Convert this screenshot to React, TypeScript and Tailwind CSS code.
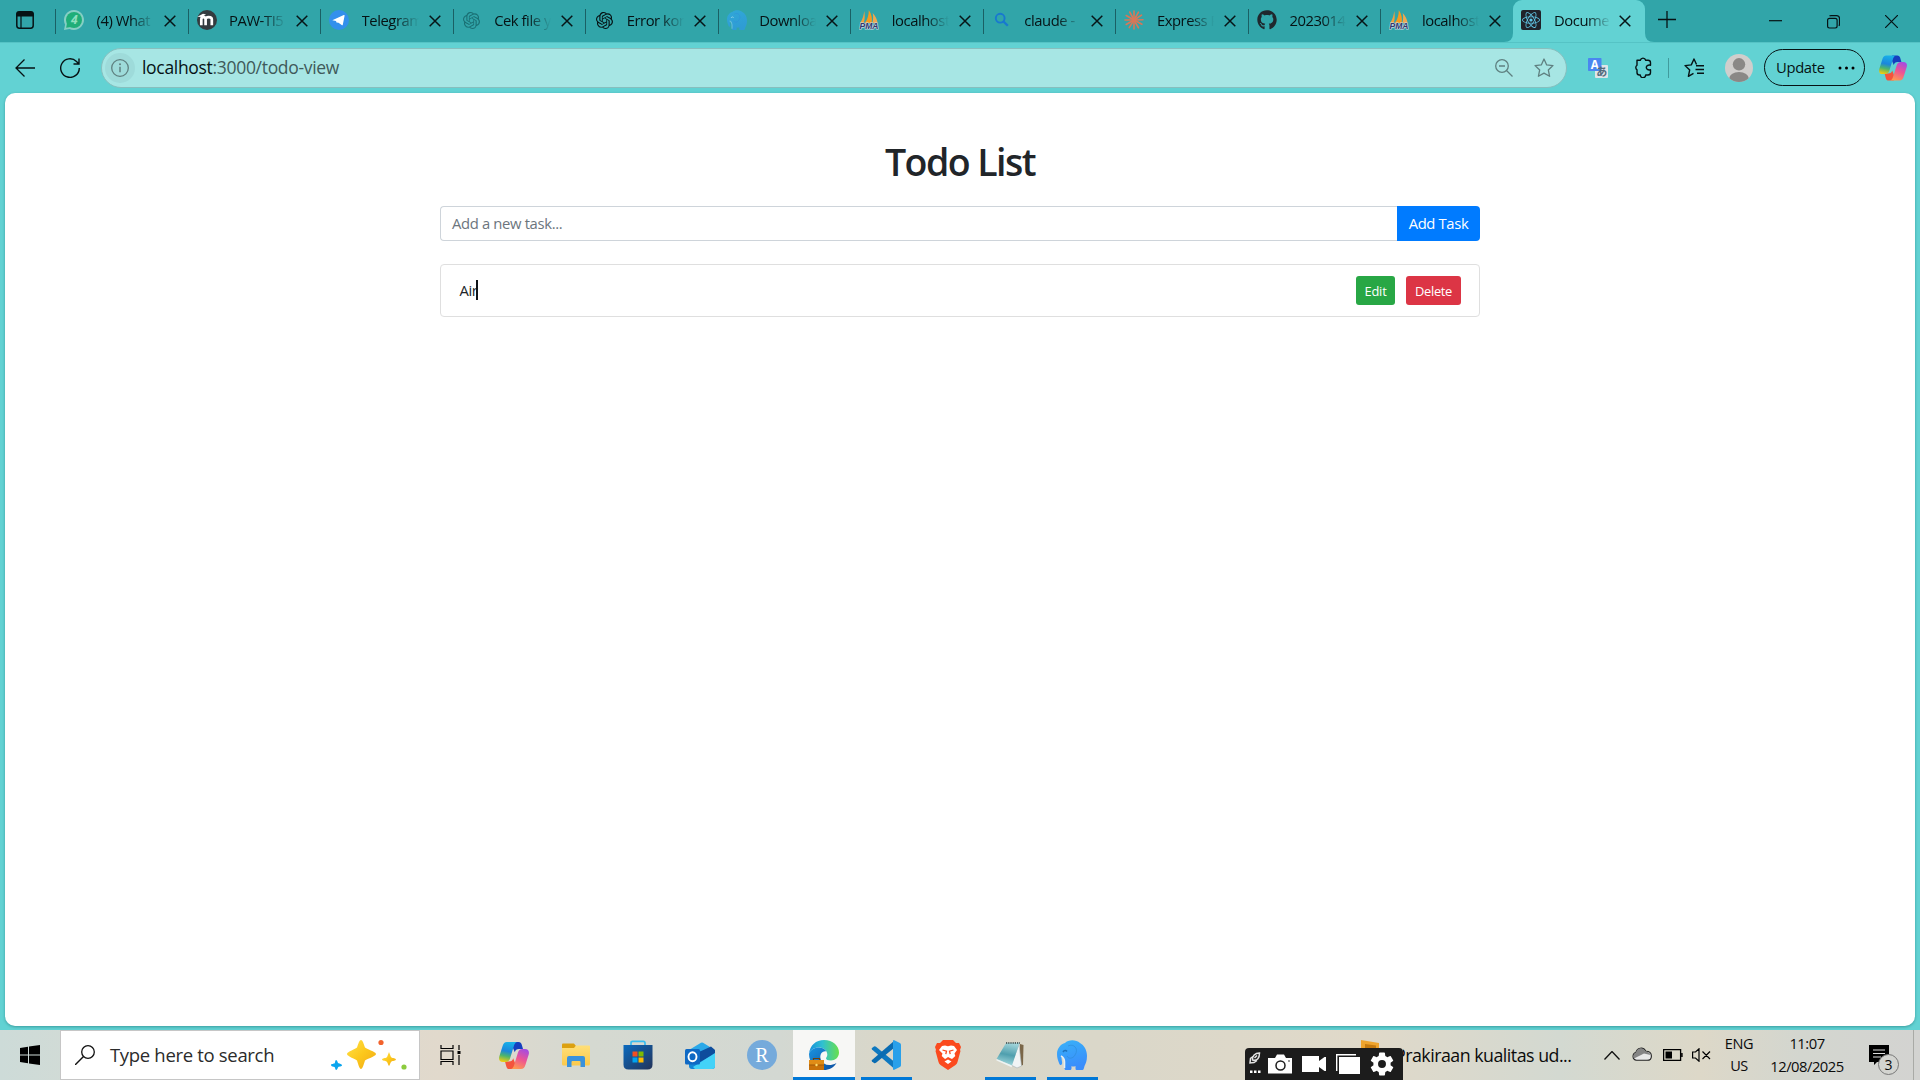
import React from "react";
import { FaGithub, FaReact } from "react-icons/fa";
import { SiOpenai } from "react-icons/si";

function Copilot({ id, w, h }: { id: string; w: number; h: number }) {
  return (
    <svg width={w} height={h} viewBox="0 0 30 27" className="shrink-0">
      <defs>
        <linearGradient id={id + "a"} x1="0.5" y1="0" x2="0.3" y2="1">
          <stop offset="0" stopColor="#18b0e8" />
          <stop offset="0.45" stopColor="#1b86dc" />
          <stop offset="0.7" stopColor="#4cb56c" />
          <stop offset="1" stopColor="#f2cc10" />
        </linearGradient>
        <linearGradient id={id + "b"} x1="0.7" y1="0" x2="0.3" y2="1">
          <stop offset="0" stopColor="#a64be0" />
          <stop offset="0.5" stopColor="#ee5592" />
          <stop offset="1" stopColor="#ff9a50" />
        </linearGradient>
      </defs>
      <path d="M14 0h5.500c2 0 2.700 1 3.200 2.600L24 7h-4c-2.500 0-3.500 1-4.200 3.200L14 6z" fill="#153fbf" />
      <path d="M16 27h-5.500c-2 0-2.700-1-3.200-2.600L6 19.500h4c2.500 0 3.500-1 4.200-3.200L16 21z" fill="#f4543c" />
      <path d="M8 0h10c-1.800.6-2.500 2-3.100 4l-3.700 12c-.8 2.700-2 4-4.700 4H4C.5 20-.5 17.500.3 14.500L3.600 4C4.500 1.200 5.500 0 8 0z" fill={`url(#${id}a)`} />
      <path d="M22 27H12c1.800-.6 2.500-2 3.100-4l3.700-12c.8-2.700 2-4 4.700-4H26c3.500 0 4.500 2.500 3.700 5.500L26.400 23c-.9 2.800-1.900 4-4.400 4z" fill={`url(#${id}b)`} />
    </svg>
  );
}

function Elephant({ size, flat }: { size: number; flat?: boolean }) {
  return (
    <svg width={size} height={size} viewBox="0 0 30 30" className="shrink-0">
      <defs>
        <linearGradient id={flat ? "elf" : "elg"} x1="0" y1="0" x2="0.3" y2="1">
          <stop offset="0" stopColor={flat ? "#30a8d8" : "#38b2f8"} />
          <stop offset="1" stopColor={flat ? "#2f9cd4" : "#3a8dfc"} />
        </linearGradient>
      </defs>
      <path d="M8 3C11-.5 19-.8 23 3c4 2 7 7 7 13 0 5-1.500 8-2.500 10-.5 2-.8 4-2 4h-6c-1 0-1-1-1-2v-2c-2 1-3 .5-4 0v2c0 1.500-.5 2-1.500 2H9c-1 0-1.500-.5-1.500-2v-8c-1-1-1.500-2-2-4l-1 2c0 2 1 4 .5 6-1 2-2.500 1-3-1-1-3-2-5-2-9C0 8 4 4 8 3z" fill={`url(#${flat ? "elf" : "elg"})`} />
      <path d="M11 6c6-3 11 3 7 9-2 4-7 4-8 1" fill="none" stroke="#2f8dda" strokeWidth="1" opacity="0.7" />
      <path d="M6 12c1.200-2 3-2 4-.5" fill="none" stroke={flat ? "#8cd2e6" : "#1f72bb"} strokeWidth="1.500" />
      <path d="M4 16c2 1 3.500 3 3.500 6v6" fill="none" stroke={flat ? "#65bddc" : "#e8eef0"} strokeWidth="1.600" />
    </svg>
  );
}

function WhatsApp() {
  return (
    <svg width="20" height="20" viewBox="0 0 20 20">
      <path d="M10 0a10 10 0 1 1-4.600 18.900L0 20l1.100-5.400A10 10 0 0 1 10 0z" fill="#86cfc4" />
      <circle cx="10" cy="10" r="8" fill="#1fae78" />
      <path d="M2.200 17.800 3 13l4 4z" fill="#1fae78" />
      <text x="10.300" y="14.300" fontSize="12" fontWeight="700" fontStyle="italic" textAnchor="middle" fill="#8fe0c0" fontFamily="Open Sans, sans-serif">4</text>
    </svg>
  );
}

function Moodle() {
  return (
    <svg width="20" height="20" viewBox="0 0 20 20">
      <circle cx="10" cy="10" r="10" fill="#333b3f" />
      <path d="M4.300 15.200V9.300c0-3 4.300-3 4.300 0v5.900m0-5.900c0-3 6.200-3 6.200 0v5.900" fill="none" stroke="#fff" strokeWidth="2.700" />
      <path d="M.4 6.800 6 3.800l3 .7-4 2.600z" fill="#fff" />
    </svg>
  );
}

function Telegram() {
  return (
    <svg width="20" height="20" viewBox="0 0 20 20">
      <circle cx="10" cy="10" r="10" fill="#3390ec" />
      <path d="M3.300 10.300 14.800 5c.6-.2.900.1.800.7l-1.800 9c-.2.700-.6.800-1.100.4l-3.200-2.400-2-.2-.5-1.400z" fill="#fff" />
    </svg>
  );
}

function Pma() {
  return (
    <svg width="20" height="20" viewBox="0 0 20 20">
      <path d="M5.200 1C6 5 6 9 4.800 13H1.200C3.500 9.500 4.900 5 5.200 1z" fill="#f0a040" />
      <path d="M9.800 0c3 4 3.600 9 2.800 13H5.800C8.500 9.500 9.800 5 9.800 0z" fill="#f79a1c" />
      <path d="M13.700 3c3 3 4.500 7 4.900 10h-5.200c.9-3 1-7 .3-10z" fill="#f0a850" />
      <text x="10" y="19.300" fontSize="8.200" fontWeight="700" fontStyle="italic" textAnchor="middle" textLength="19" lengthAdjust="spacingAndGlyphs" fill="#35386e" stroke="#c9dde6" strokeWidth="1.200" paintOrder="stroke" fontFamily="Liberation Sans, sans-serif">PMA</text>
    </svg>
  );
}

function Search() {
  return (
    <svg width="20" height="20" viewBox="0 0 20 20">
      <circle cx="8.200" cy="8.200" r="4.400" fill="none" stroke="#1878d0" strokeWidth="1.900" />
      <path d="m11.500 11.500 4.300 4.300" stroke="#1878d0" strokeWidth="2.300" />
    </svg>
  );
}

function Burst() {
  const rays = [0, 30, 57, 88, 118, 150, 180, 212, 240, 270, 300, 332];
  return (
    <svg width="20" height="20" viewBox="0 0 20 20">
      {rays.map((r) => (
        <path key={r} d="M10 10V1" stroke="#d97757" strokeWidth="1.600" strokeLinecap="round" transform={`rotate(${r} 10 10)`} />
      ))}
    </svg>
  );
}

function CloseX() {
  return (
    <svg width="12" height="12" viewBox="0 0 12 12" className="shrink-0">
      <path d="m.7.700 10.600 10.600m0-10.600L.7 11.300" stroke="#071517" strokeWidth="1.500" />
    </svg>
  );
}

const tabs: { t: string; icon: React.ReactNode }[] = [
  { t: "(4) What", icon: <WhatsApp /> },
  { t: "PAW-TI5", icon: <Moodle /> },
  { t: "Telegram", icon: <Telegram /> },
  { t: "Cek file y", icon: <SiOpenai size={17} color="#1a6f73" /> },
  { t: "Error kon", icon: <SiOpenai size={17} color="#051012" /> },
  { t: "Downloa", icon: <Elephant size={20} flat /> },
  { t: "localhost", icon: <Pma /> },
  { t: "claude -", icon: <Search /> },
  { t: "Express R", icon: <Burst /> },
  { t: "2023014", icon: <FaGithub size={20} color="#1f282e" /> },
  { t: "localhost", icon: <Pma /> },
];

const tabText =
  "w-[57px] shrink-0 overflow-hidden whitespace-nowrap text-[14.800px] leading-[20px] tracking-[-0.450px] text-[#061214] [mask-image:linear-gradient(to_right,black_58%,transparent_100%)]";

function TabBar() {
  return (
    <div className="flex h-[42px] bg-[#31a5a9]">
      <div className="flex w-[55px] shrink-0 items-center pl-[16px] pb-[2px]">
        <svg width="18" height="18" viewBox="0 0 18 18">
          <rect x="0.800" y="0.800" width="16.400" height="16.400" rx="2.600" fill="none" stroke="#061214" strokeWidth="1.500" />
          <path d="M1 2.500Q1 1 3 1h12q2 0 2 1.500V5H1zM5 5v12" fill="#061214" stroke="#061214" strokeWidth="1.200" />
        </svg>
      </div>
      {tabs.map((tab, i) => (
        <div key={i} className="flex h-[40px] w-[132.550px] shrink-0 items-center">
          <div className="mt-[3px] h-[25px] w-px shrink-0 bg-[#1a6064]" />
          <div className="ml-[8px] flex h-[20px] w-[20px] shrink-0 items-center justify-center">{tab.icon}</div>
          <div className={"ml-[12.500px] " + tabText}>{tab.t}</div>
          <div className="ml-[10px] mt-[2px]"><CloseX /></div>
        </div>
      ))}
      <div className="relative flex h-[42px] w-[132px] shrink-0 items-center rounded-t-[9px] bg-[#62d2d3] pb-[2px]">
        <svg className="absolute -left-[9px] bottom-0" width="9" height="9" viewBox="0 0 9 9"><path d="M9 0v9H0q9 0 9-9z" fill="#62d2d3" /></svg>
        <svg className="absolute -right-[9px] bottom-0" width="9" height="9" viewBox="0 0 9 9"><path d="M0 0v9h9Q0 9 0 0z" fill="#62d2d3" /></svg>
        <div className="ml-[8px] flex h-[20px] w-[20px] items-center justify-center rounded-[2px] bg-[#20232a]">
          <FaReact size={18} color="#61c8e8" />
        </div>
        <div className={"ml-[13px] " + tabText}>Docume</div>
        <div className="ml-[8px] mt-[2px]"><CloseX /></div>
      </div>
      <svg className="ml-[13px] mt-[11px]" width="18" height="18" viewBox="0 0 18 18"><path d="M9 0v17M0 8.500h18" stroke="#061214" strokeWidth="1.300" /></svg>
      <svg className="ml-[93px] mt-[20px]" width="13" height="2"><path d="M0 .7h13" stroke="#061214" strokeWidth="1.200" /></svg>
      <svg className="ml-[45px] mt-[15px]" width="13" height="14" viewBox="0 0 13 14">
        <path d="M.6 5.200q0-1.900 1.900-1.900h5.700q1.900 0 1.900 1.900v5.900q0 1.900-1.900 1.900H2.500Q.6 13 .6 11.100zM2.500 1q.5-.4 1.500-.4h5.500q3 0 3 3v5.500q0 1-.6 1.700" fill="none" stroke="#061214" strokeWidth="1.200" />
      </svg>
      <svg className="ml-[45px] mt-[15px]" width="13" height="13" viewBox="0 0 13 13"><path d="m0 0 13 13M13 0 0 13" stroke="#061214" strokeWidth="1.200" /></svg>
    </div>
  );
}

const star = "m10 1 2.700 5.900 6.300.7-4.700 4.300 1.300 6.400L10 15.100l-5.600 3.200 1.300-6.400L1 7.600l6.300-.7z";

function Toolbar() {
  return (
    <div className="flex h-[51px] items-center border-t border-[#55c3c5] bg-[#62d2d3]">
      <svg className="ml-[15px] shrink-0" width="20" height="18" viewBox="0 0 20 18"><path d="M20 9H1M9.500.5 1 9l8.500 8.500" fill="none" stroke="#061214" strokeWidth="1.300" /></svg>
      <svg className="ml-[25px] shrink-0" width="20" height="20" viewBox="0 0 20 20"><path d="M19.300 10A9.300 9.300 0 1 1 16.500 3.400L19 6M19 .5V6h-5.500" fill="none" stroke="#061214" strokeWidth="1.400" /></svg>
      <div className="-mt-px ml-[21px] flex h-[40px] w-[1466px] shrink-0 items-center rounded-full border border-[#87bfbe] bg-[#a7e6e4]">
        <div className="ml-[3px] flex h-[30px] w-[30px] items-center justify-center rounded-full bg-[#9edbda]">
          <svg width="18" height="18" viewBox="0 0 18 18"><circle cx="9" cy="9" r="8.300" fill="none" stroke="#5f8080" strokeWidth="1.300" /><path d="M9 7.700v5.500" stroke="#5f8080" strokeWidth="1.500" /><circle cx="9" cy="5.300" r="1" fill="#5f8080" /></svg>
        </div>
        <div className="ml-[7px] flex-1 text-[17.500px] tracking-[-0.310px] text-[#3f5a5a]"><span className="text-[#061214]">localhost</span>:3000/todo-view</div>
        <svg width="18" height="18" viewBox="0 0 18 18"><circle cx="7" cy="7" r="6.300" fill="none" stroke="#5f8080" strokeWidth="1.300" /><path d="M11.500 11.500 17.500 17.500M4 7h6" stroke="#5f8080" strokeWidth="1.300" /></svg>
        <svg className="ml-[21px] mr-[12px]" width="20" height="20" viewBox="0 0 20 20"><path d={star} fill="none" stroke="#5f8080" strokeWidth="1.300" strokeLinejoin="round" /></svg>
      </div>
      <svg className="ml-[21px] shrink-0" width="21" height="21" viewBox="0 0 21 21">
        <rect x="7" y="7" width="13" height="13" rx="1" fill="#dfe5e8" />
        <rect x="0" y="0" width="13.500" height="13" rx="0.800" fill="#4a86f0" />
        <text x="6.700" y="10.500" fontSize="11.500" fontWeight="700" textAnchor="middle" fill="#fff" fontFamily="Open Sans, sans-serif">A</text>
        <text x="13.700" y="17.800" fontSize="11" fontWeight="700" textAnchor="middle" fill="#546b7c" fontFamily="Noto Sans CJK JP, sans-serif">あ</text>
      </svg>
      <svg className="-mt-px ml-[24px] shrink-0" width="20" height="21" viewBox="0 0 20 21">
        <path d="M4 3.200h3.300a2.800 2.800 0 0 1 5.400 0H15q2.500 0 2.500 2.500v2.500c-2.800-.6-4.200 1-4.200 2.300s1.400 2.900 4.200 2.300v2.700q0 2.500-2.500 2.500h-2.300a2.700 2.700 0 0 1-5.400 0H6.500q-2.500 0-2.500-2.500v-2.700a2.800 2.800 0 0 1 0-4.600z" fill="none" stroke="#061214" strokeWidth="1.400" strokeLinejoin="round" />
      </svg>
      <div className="ml-[15px] h-[20px] w-px shrink-0 bg-[#409b9d]" />
      <svg className="ml-[15px] shrink-0" width="20" height="20" viewBox="0 0 20 20"><path d="M12.500 6.500 10 1 7.300 6.900 1 7.600l4.700 4.300-1.300 6.400L9.500 15.300M12 7.800h8M11.500 11.500H20M13 15.200h7" fill="none" stroke="#061214" strokeWidth="1.400" strokeLinejoin="round" /></svg>
      <svg className="ml-[21px] shrink-0" width="28" height="28" viewBox="0 0 28 28">
        <clipPath id="av"><circle cx="14" cy="14" r="14" /></clipPath>
        <g clipPath="url(#av)"><rect width="28" height="28" fill="#d0cecc" /><circle cx="14" cy="10.300" r="6.200" fill="#8a8886" /><ellipse cx="14" cy="25" rx="10" ry="7" fill="#8a8886" /></g>
      </svg>
      <div className="-mt-px ml-[11px] flex h-[37px] w-[101px] shrink-0 items-center rounded-full border-[1.500px] border-[#061214] pl-[11px]">
        <span className="w-[50px] text-[14.800px] tracking-[-0.350px] text-[#061214]">Update</span>
        <svg className="ml-[12px]" width="18" height="4" viewBox="0 0 18 4"><circle cx="2" cy="2" r="1.500" /><circle cx="8.500" cy="2" r="1.500" /><circle cx="15" cy="2" r="1.500" /></svg>
      </div>
      <div className="ml-[14px]"><Copilot id="ct" w={28} h={26} /></div>
    </div>
  );
}

function Todo() {
  return (
    <main className="mx-[5px] h-[933px] rounded-[10px] bg-white shadow-[0_1px_3px_#3a9c9e]">
      <div className="mx-auto w-[1040px] pt-[45px] text-[14.800px] text-[#212529]">
        <h1 className="h-[48px] text-center text-[37.500px] font-semibold leading-[48px] tracking-[-1.550px]">Todo List</h1>
        <div className="mt-[20px] flex h-[35px]">
          <div className="flex-1 rounded-l-[4px] border border-r-0 border-[#ced4da] pl-[11px] leading-[33px] tracking-[-0.340px] text-[#6c757d]">Add a new task...</div>
          <button className="w-[83px] rounded-r-[4px] bg-[#007bff] tracking-[-0.350px] text-white">Add Task</button>
        </div>
        <div className="mt-[23px] flex h-[53px] items-center rounded-[4px] border border-[#dfdfdf] pl-[18.500px] pr-[18px]">
          <span className="tracking-[-0.400px]">Air</span>
          <span className="-ml-[1px] -mt-[2px] h-[20px] w-[2px] bg-[#101418]" />
          <button className="ml-auto h-[29px] w-[39px] rounded-[3px] bg-[#28a745] pt-[2px] text-[12.900px] tracking-[-0.200px] text-white">Edit</button>
          <button className="ml-[11px] h-[29px] w-[55px] rounded-[3px] bg-[#dc3545] pt-[2px] text-[12.900px] tracking-[-0.300px] text-white">Delete</button>
        </div>
      </div>
    </main>
  );
}

function TaskButton({ children, bar, active }: { children: React.ReactNode; bar?: boolean; active?: boolean }) {
  return (
    <div className={"flex h-[50px] w-[62px] shrink-0 flex-col items-center " + (active ? "bg-[#f7f7f5]" : "")}>
      <div className="flex h-[47px] items-center pt-[3px]">{children}</div>
      <div className={"h-[3px] " + (active ? "w-full bg-[#0078d7]" : bar ? "w-[51px] bg-[#0078d7]" : "w-0")} />
    </div>
  );
}

function Taskbar() {
  return (
    <footer className="flex h-[50px] bg-[linear-gradient(90deg,#cddbd8_0px,#dbdad0_250px,#e1d9cc_440px,#d5d9d1_590px,#d3d8d2_780px,#d9d7ca_880px,#dad7c9_1100px,#e0d9c9_1370px,#d3d9d1_1560px,#ddd8c8_1700px,#d3d6cf_1800px,#d3d3d1_1920px)] text-[#0b0b0b]">
      <div className="flex w-[60px] shrink-0 items-center justify-center">
        <svg width="20" height="20" viewBox="0 0 20 20"><path d="M0 3l8-1.200V9.500H0zM9 1.600 20 0v9.500H9zM0 10.500h8v7.700L0 17zM9 10.500h11V20L9 18.400z" fill="#000" /></svg>
      </div>
      <div className="flex h-[50px] w-[360px] shrink-0 items-center border border-[#c6c6c6] bg-white pl-[14px]">
        <svg width="20" height="20" viewBox="0 0 20 20"><circle cx="13" cy="7" r="6.300" fill="none" stroke="#111" strokeWidth="1.300" /><path d="M8.500 11.500 0 20" stroke="#111" strokeWidth="1.400" /></svg>
        <span className="ml-[15px] w-[221px] whitespace-nowrap text-[18.500px] tracking-[-0.320px] text-[#2b2b2b]">Type here to search</span>
        <svg width="76" height="32" viewBox="0 0 76 32">
          <defs><linearGradient id="sp" x1="0" y1="0" x2="1" y2="1"><stop offset="0" stopColor="#ffe14a" /><stop offset="0.500" stopColor="#fcc81c" /><stop offset="1" stopColor="#f0a818" /></linearGradient></defs>
          <path d="M30 1c1.500 0 2.500 3 4 7.500 1 1.500 11 4 11 6.500s-10 5-11 6.500C32.500 26 31.500 30 30 30s-2.500-4-4-8.500C25 20 16 17.500 16 15s9-5 10-6.500C27.500 4 28.500 1 30 1z" fill="url(#sp)" />
          <path d="M58 13c1 2 1.500 5 2.500 5.500s4.500 1 4.500 2-3.500 1.500-4.500 2S59 26 58 27c-1-1-1.500-4-2.500-4.500s-4.500-1-4.500-2 3.500-1.500 4.500-2S57 15 58 13z" fill="url(#sp)" />
          <path d="M5 21c1.500 0 1.500 3 2.500 3.300S11 25 11 26.300 8 27.500 7.300 28 6.500 31 5.200 31 4.500 28.500 3.500 28 0 27.500 0 26s3-1 3.700-1.800S4 21 5 21z" fill="#0aa5ee" />
          <circle cx="50" cy="3.500" r="2.600" fill="#f2622c" /><circle cx="73" cy="28" r="2.600" fill="#8ccb3e" />
        </svg>
      </div>
      <div className="mr-[3px] flex w-[60px] shrink-0 items-center justify-center">
        <svg width="21" height="20" viewBox="0 0 21 20"><path d="M1 0v3.500h12V0M1 20v-3.500h12V20M1 6h12v8.500H1zM19 0v5M19 10v10" fill="none" stroke="#000" strokeWidth="1.200" /><rect x="17.500" y="6" width="3" height="3" /></svg>
      </div>
      <TaskButton><Copilot id="cb" w={30} h={27} /></TaskButton>
      <TaskButton>
        <svg width="28" height="24" viewBox="0 0 28 24">
          <defs><linearGradient id="fo" x1="0" y1="0" x2="0" y2="1"><stop offset="0" stopColor="#ffdf78" /><stop offset="1" stopColor="#fbc94c" /></linearGradient></defs>
          <path d="M0 1.500Q0 .5 1 .5h11l2 2.500v5H0z" fill="#dca010" /><path d="M0 5h12l2-2.500h13q1 0 1 1V21q0 1.500-1.500 1.500h-25Q0 22.500 0 21z" fill="url(#fo)" />
          <path d="M5 24V15q0-2 2-2h14q2 0 2 2v9h-4.500v-5q0-1-1-1h-7q-1 0-1 1v5z" fill="#3a92dc" />
        </svg>
      </TaskButton>
      <TaskButton>
        <svg width="30" height="30" viewBox="0 0 30 30">
          <defs><linearGradient id="st" x1="0" y1="0" x2="1" y2="1"><stop offset="0" stopColor="#0a6abf" /><stop offset="1" stopColor="#243358" /></linearGradient></defs>
          <path d="M8 5V3q0-1.700 1.700-1.700h10.600Q22 1.300 22 3v2" fill="none" stroke="#38bdf0" strokeWidth="1.700" />
          <path d="M.5 5h29v19.500q0 5-5 5h-19q-5 0-5-5z" fill="url(#st)" />
          <path d="M9.500 11.500h5v5h-5z" fill="#f25022" /><path d="M15.500 11.500h5v5h-5z" fill="#7fba00" /><path d="M9.500 17.500h5v5h-5z" fill="#00a4ef" /><path d="M15.500 17.500h5v5h-5z" fill="#ffb900" />
        </svg>
      </TaskButton>
      <TaskButton>
        <svg width="30" height="27" viewBox="0 0 30 27">
          <path d="M4 8 16 .8q1-.5 2 0L29 7.500 30 12H4z" fill="#2ba8e8" /><path d="M4 9h26v15q0 3-3 3H7q-3 0-3-3z" fill="#1286d8" />
          <path d="M14 10 26 4.500l4 3.500v4L15 20z" fill="#0e4d9c" /><path d="m30 11-22 14 2 2h17q3 0 3-3z" fill="#43d2f8" />
          <rect x="0" y="7" width="15" height="15.500" rx="1.500" fill="#0f69c4" />
          <ellipse cx="7.500" cy="14.700" rx="4" ry="4.500" fill="none" stroke="#fff" strokeWidth="1.900" />
        </svg>
      </TaskButton>
      <TaskButton>
        <div className="flex h-[30px] w-[30px] items-center justify-center rounded-full bg-[#75aadb] font-['Liberation_Serif',serif] text-[20px] text-white">R</div>
      </TaskButton>
      <TaskButton active>
        <svg width="30" height="30" viewBox="0 0 30 30">
          <defs>
            <linearGradient id="e1" x1="0" y1="0.500" x2="1" y2="0.500"><stop offset="0" stopColor="#1590dc" /><stop offset="0.450" stopColor="#30c0d0" /><stop offset="1" stopColor="#68e04c" /></linearGradient>
            <linearGradient id="e2" x1="0" y1="0" x2="1" y2="1"><stop offset="0" stopColor="#1a94e0" /><stop offset="1" stopColor="#0c4ea0" /></linearGradient>
          </defs>
          <path d="M0 14C1 5 7 0 15 0c9 0 15 6 15 12.500 0 5-4 8-8 8-3 0-5-.7-5-2 0-1 1.300-1.500 1.300-4C18.300 10 14 7.500 10 7.500 5 7.500 1 10 0 14z" fill="url(#e1)" />
          <path d="M0 14c1-4 5-6.500 10-6.500 3 0 6 1.500 7.500 4C13 10.500 10 15 12 20c2 4.500 8 7 15.500 3C25 27.500 20 30 15 30 7 30 0 23 0 14z" fill="url(#e2)" />
          <path d="M0 20h15v10H0z" fill="#c9720a" /><path d="M0 20h15v5H0z" fill="#e08c16" /><path d="M4.500 20v-1.500h6V20" fill="none" stroke="#71400a" strokeWidth="1.200" /><path d="M0 25h15" stroke="#a15808" /><circle cx="7.500" cy="25" r="1.200" fill="#ffdf70" />
        </svg>
      </TaskButton>
      <TaskButton bar>
        <svg width="30" height="30" viewBox="0 0 30 30">
          <path d="M1 8.500 3 7q1-.6 2 .2L23 22v7L1 10q-.8-.8 0-1.500z" fill="#0e78c0" transform="translate(0 -.4)" />
          <path d="M1 21.500 3 23q1 .6 2-.2L23 8V1L1 20q-.8.800 0 1.500z" fill="#0a6cb2" />
          <path d="M22 .3q.6-.3 1.300 0l5.600 2.700Q30 3.500 30 4.800v20.400q0 1.300-1.100 1.800l-5.600 2.700q-.7.300-1.300 0z" fill="#29a0ea" />
        </svg>
      </TaskButton>
      <TaskButton>
        <svg width="26" height="30" viewBox="0 0 26 30"><path d="M5 3 8 0h10l3 3h3l2 4-1 3 .5 1-3 11q-.5 2-2 3L13 30l-7.500-5q-1.500-1-2-3L.5 11 1 10 0 7l2-4z" fill="#fb4a1e" /><path d="M7 6 10 5.500l3 .7 3-.7 3 .5 3 4-2.500 3.500.8 2.500-3.300 3-1-.5L13 17l-2 1.500-1 .5-3.300-3 .8-2.500L4 10zM13 19.500l3.500 2-3.500 2.500-3.500-2.500z" fill="#fff" /><path d="m7.500 10 4 1.200-.7 3M18.500 10l-4 1.200.7 3" stroke="#fb4a1e" strokeWidth="1.300" fill="none" /></svg>
      </TaskButton>
      <TaskButton bar>
        <svg width="28" height="28" viewBox="0 0 28 28">
          <defs><linearGradient id="np" x1="0.500" y1="0" x2="0.300" y2="1"><stop offset="0" stopColor="#9fd3d9" /><stop offset="0.500" stopColor="#4f9fae" /><stop offset="1" stopColor="#a8dce0" /></linearGradient></defs>
          <path d="m24 3 3.500 1-.5 20-3 1z" fill="#7a6648" /><path d="M23 3.500 25.500 25 21 27l-6-3z" fill="#f0f4f5" stroke="#a4b0b4" strokeWidth="0.600" />
          <path d="M10 2h13.500L16 24.500.5 18z" fill="url(#np)" /><path d="m.5 18 15.500 6.500-.3 1.700L.5 19.500z" fill="#eef4f4" /><path d="M10 2h14" stroke="#566" strokeWidth="1.800" strokeDasharray="1.200 1" />
        </svg>
      </TaskButton>
      <TaskButton bar><Elephant size={30} /></TaskButton>
      <div className="ml-[142px] flex h-[50px] w-[158px] shrink-0 flex-col justify-end">
        <svg className="-mb-[8px] ml-[116px]" width="19" height="16" viewBox="0 0 19 16"><path d="m0 0 18 3v13H0z" fill="#efa42e" /><path d="m4 4 11 1.500V14H4z" fill="#c57a10" /></svg>
        <div className="relative flex h-[32px] items-center rounded-t-[4px] bg-[#1c1c1c] pl-[4px]">
          <svg className="-mt-[3px]" width="12" height="22" viewBox="0 0 12 22"><path d="M3.500 8C3 4 6 1 10.500 1c0 5-2 8-7 7zM4 4.500 1.500 6.500 1 11l4-.5 3-2M5.500 6l2.500-2.500" fill="none" stroke="#e4e4e4" strokeWidth="1.500" /><path d="M1 18.500h2.500V21H1zM5 18.500h2.500V21H5zM9 18.500h2.500V21H9z" fill="#fff" /></svg>
          <svg className="ml-[7px]" width="24" height="20" viewBox="0 0 24 20"><path d="M0 4h7l2-3.500h7L18 4h6v15.500H0z" fill="#fff" /><circle cx="12.500" cy="11.500" r="4.500" fill="none" stroke="#1c1c1c" strokeWidth="1.500" /><circle cx="21" cy="7" r=".8" fill="#1c1c1c" /></svg>
          <svg className="ml-[10px]" width="24" height="16" viewBox="0 0 24 16"><path d="M0 0h17v5l5.500-4H24v14h-1.500L17 11v5H0z" fill="#fff" /></svg>
          <svg className="ml-[10px]" width="24" height="20" viewBox="0 0 24 20"><path d="M.7 17V.7H20" fill="none" stroke="#fff" strokeWidth="1.400" /><path d="M3 3h21v17H3z" fill="#fff" /></svg>
          <svg className="ml-[10px]" width="24" height="24" viewBox="2 2 20 20"><path fill="#fff" d="M19.140 12.940c.04-.3.060-.61.060-.94s-.02-.64-.07-.94l2.030-1.580a.49.490 0 0 0 .12-.61l-1.920-3.320a.49.490 0 0 0-.59-.22l-2.390.96a7 7 0 0 0-1.620-.94l-.36-2.540A.48.480 0 0 0 13.920 2.400h-3.840a.47.470 0 0 0-.47.410l-.36 2.540c-.59.240-1.130.57-1.620.94l-2.390-.96a.48.480 0 0 0-.59.220L2.740 8.870a.47.470 0 0 0 .12.610l2.030 1.580a6 6 0 0 0 0 1.880l-2.030 1.580a.49.490 0 0 0-.12.610l1.920 3.320c.12.220.37.290.59.220l2.390-.96c.5.380 1.030.7 1.620.94l.36 2.540c.05.240.24.410.48.410h3.840c.24 0 .44-.17.470-.41l.36-2.540c.59-.24 1.130-.56 1.620-.94l2.390.96c.22.080.47 0 .59-.22l1.920-3.320a.47.470 0 0 0-.12-.61zM12 15.300A3.300 3.300 0 1 1 12 8.700a3.300 3.300 0 0 1 0 6.600z" /></svg>
        </div>
      </div>
      <div className="flex w-[201px] shrink-0 items-center overflow-hidden whitespace-nowrap text-[17.800px] tracking-[-0.500px]"><span className="-ml-[8px]">Prakiraan kualitas ud...</span></div>
      <div className="flex w-[108px] shrink-0 items-center">
        <svg width="16" height="9" viewBox="0 0 16 9"><path d="m.5 8.500 7.500-8 7.500 8" fill="none" stroke="#111" strokeWidth="1.300" /></svg>
        <svg className="-mt-[2px] ml-[12px]" width="20" height="14" viewBox="0 0 20 14"><path d="M4.500 13.300a4 4 0 0 1-.6-7.800C5 1 11-.8 13.700 4.200c3.700-.2 5.700 2 5.700 4.700 0 2.600-1.700 4.400-4.200 4.400z" fill="#e8e8e8" stroke="#222" strokeWidth="1.100" /><path d="M4 5.500C5 1 11-.5 13.500 4.300 16 4.500 18 6 18.500 8L12 6.500 2 11.500Q0 7 4 5.500z" fill="#858585" /></svg>
        <svg className="ml-[11px]" width="20" height="12" viewBox="0 0 20 12"><path d="M.6.600h17v10.800H.6zM19 4v4" fill="none" stroke="#000" strokeWidth="1.300" /><path d="M2.500 2.500H9v7H2.500z" /></svg>
        <svg className="ml-[9px]" width="19" height="14" viewBox="0 0 19 14"><path d="M.6 4h2.900L7 .8v12.400L3.500 10H.6zM10.500 3.500l7.500 7.500m0-7.500L10.500 11" fill="none" stroke="#000" strokeWidth="1.200" /></svg>
      </div>
      <div className="flex w-[54px] shrink-0 flex-col items-center pt-[3px] text-[14.500px] leading-[22px] tracking-[-0.400px]"><span>ENG</span><span>US</span></div>
      <div className="flex w-[82px] shrink-0 flex-col items-center pt-[2px] text-[14.800px] leading-[23px] tracking-[-0.500px]"><span>11:07</span><span>12/08/2025</span></div>
      <div className="relative ml-[21px] mt-[15px] h-[30px] w-[44px] shrink-0">
        <svg width="20" height="20" viewBox="0 0 20 20"><path d="M0 0h20v17H8l-3 3v-3H0z" /><path d="M4 5h12M4 8.500h12M4 12h8" stroke="#ddd" strokeWidth="1.200" /></svg>
        <div className="absolute left-[9px] top-[9px] flex h-[21px] w-[21px] items-center justify-center rounded-full border border-[#777] bg-[#d3d4d0] text-[14px] leading-none">3</div>
      </div>
      <div className="w-px bg-[#a9aaa6]" />
    </footer>
  );
}

export default function App() {
  return (
    <div className="h-[1080px] w-[1920px] overflow-hidden bg-[#62d2d3] font-['Open_Sans','Noto_Sans',sans-serif]">
      <TabBar />
      <Toolbar />
      <Todo />
      <div className="h-[4px]" />
      <Taskbar />
    </div>
  );
}
